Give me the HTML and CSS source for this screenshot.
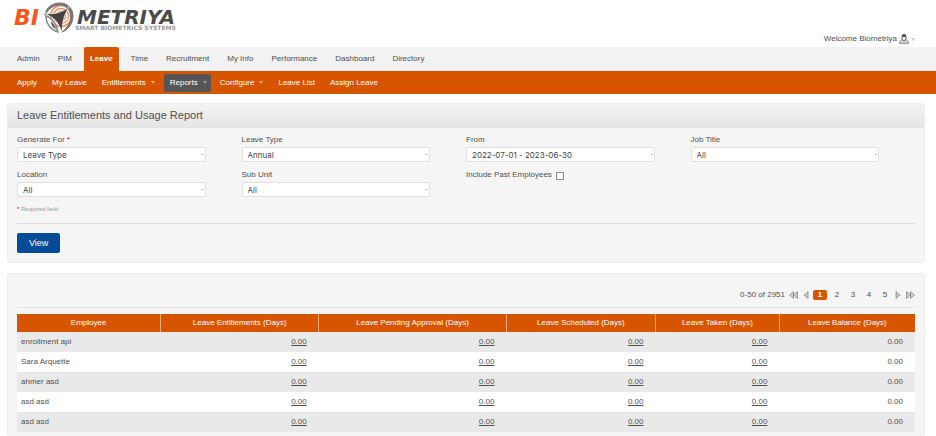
FILE: index.html
```html
<!DOCTYPE html>
<html lang="en">

<head>
  <meta charset="UTF-8" />
  <meta name="viewport" content="width=device-width, initial-scale=1.0" />
  <title>Leave Entitlements and Usage Report</title>
  <link rel="stylesheet" href="styles.css">
</head>

<body>
  <header class="header">
    <svg class="logo" width="170" height="34" viewBox="0 0 170 34" role="img" aria-label="Biometriya">
      <text class="logo-bi" x="0" y="24">BI</text>
      <!-- emblem -->
      <circle cx="46" cy="16" r="12" fill="#fff" />
      <g fill="none" stroke="#f58a58">
        <circle cx="47" cy="15" r="10.500" stroke-width="1.600" />
        <circle cx="47" cy="15" r="7.500" stroke-width="1.400" />
        <circle cx="47" cy="15" r="4.500" stroke-width="1.400" />
      </g>
      <path d="M31 14C32 6 39 2 46 2c8 0 13 6 13 13 0 8-5 14-11 16 5-4 9-9 8.500-16C56 8 52 4 46 4c-6 0-11 3-15 10z" fill="#777" stroke="#777" />
      <path d="M31 12c8 2 16 0 24-6-5 8-7 15-7 26-2-6-4-11-8-14-2-2-5-3-9-6z" fill="#444" stroke="#fff" stroke-width=".6" />
      <path d="M32 15c5 1 10 7 12 16-7-2-12-8-12-16z" fill="#fff" stroke="#888" stroke-width="1.500" />
      <path d="M37 20c2 2 4 5 5 8-3-1-5-4-5-8z" fill="#555" />
      <text class="logo-name" x="63" y="23">METRIYA</text>
      <text class="logo-tag" x="61" y="29">SMART BIOMETRICS SYSTEMS</text>
    </svg>
    <a class="welcome" href="#">
      Welcome Biometriya
      <svg width="10" height="10" viewBox="0 0 10 10" aria-hidden="true">
        <path d="M.5 9.500V7.500L3 5.500h4l2.500 2v2z" fill="#ccc" stroke="#888" stroke-width=".8" />
        <path d="M3 5V2.500a2 2 0 0 1 4 0V5L5 7z" fill="#eee" stroke="#666" />
        <path d="M3 3V2a2 2 0 0 1 4 0v1z" fill="#555" />
      </svg>
      <span class="caret"></span>
    </a>
  </header>

  <nav class="menu">
    <a href="#">Admin</a>
    <a href="#">PIM</a>
    <a href="#" class="current">Leave</a>
    <a href="#">Time</a>
    <a href="#">Recruitment</a>
    <a href="#">My Info</a>
    <a href="#">Performance</a>
    <a href="#">Dashboard</a>
    <a href="#">Directory</a>
  </nav>

  <nav class="submenu">
    <a href="#">Apply</a>
    <a href="#">My Leave</a>
    <a href="#">Entitlements <span class="caret"></span></a>
    <a href="#" class="selected">Reports <span class="caret"></span></a>
    <a href="#">Configure <span class="caret"></span></a>
    <a href="#">Leave List</a>
    <a href="#">Assign Leave</a>
  </nav>

  <main class="content">
    <section class="box">
      <h1 class="head">Leave Entitlements and Usage Report</h1>
      <form class="inner">
        <div class="fields">
          <div class="field">
            <label for="reportType">Generate For <em>*</em></label>
            <select id="reportType"><option>Leave Type</option></select>
          </div>
          <div class="field">
            <label for="leaveType">Leave Type</label>
            <select id="leaveType"><option>Annual</option></select>
          </div>
          <div class="field">
            <label for="period">From</label>
            <select id="period"><option>2022-07-01 - 2023-06-30</option></select>
          </div>
          <div class="field">
            <label for="jobTitle">Job Title</label>
            <select id="jobTitle"><option>All</option></select>
          </div>
          <div class="field">
            <label for="location">Location</label>
            <select id="location"><option>All</option></select>
          </div>
          <div class="field">
            <label for="subUnit">Sub Unit</label>
            <select id="subUnit"><option>All</option></select>
          </div>
          <div class="field check">
            <label for="pastEmployees">Include Past Employees</label>
            <input type="checkbox" id="pastEmployees" />
          </div>
        </div>
        <p class="required"><em>*</em> Required field</p>
        <div class="actions">
          <button type="button">View</button>
        </div>
      </form>
    </section>

    <section class="box results">
      <div class="paging">
        <span class="count">0-50 of 2951</span>
        <a href="#" aria-label="First"><svg width="10" height="8" viewBox="0 0 10 8">
            <path d="M4.500 .5v7L.5 4zM8.500 .5v7L4.500 4z" />
          </svg></a>
        <a href="#" aria-label="Previous"><svg width="6" height="8" viewBox="0 0 6 8">
            <path d="M5 .5v7L1 4z" />
          </svg></a>
        <a href="#" class="page current">1</a>
        <a href="#" class="page">2</a>
        <a href="#" class="page">3</a>
        <a href="#" class="page">4</a>
        <a href="#" class="page">5</a>
        <a href="#" aria-label="Next"><svg width="6" height="8" viewBox="0 0 6 8">
            <path d="M1 .5v7L5 4z" />
          </svg></a>
        <a href="#" aria-label="Last"><svg width="10" height="8" viewBox="0 0 10 8">
            <path d="M1.500 .5v7L5.500 4zM5.500 .5v7L9.500 4z" />
          </svg></a>
      </div>
      <table class="table">
        <colgroup>
          <col class="col-employee">
          <col class="col-entitlements">
          <col class="col-pending">
          <col class="col-scheduled">
          <col class="col-taken">
          <col class="col-balance">
        </colgroup>
        <thead>
          <tr>
            <th>Employee</th>
            <th>Leave Entitlements (Days)</th>
            <th>Leave Pending Approval (Days)</th>
            <th>Leave Scheduled (Days)</th>
            <th>Leave Taken (Days)</th>
            <th>Leave Balance (Days)</th>
          </tr>
        </thead>
        <tbody>
          <tr>
            <td>enrollment api</td>
            <td><a href="#">0.00</a></td>
            <td><a href="#">0.00</a></td>
            <td><a href="#">0.00</a></td>
            <td><a href="#">0.00</a></td>
            <td>0.00</td>
          </tr>
          <tr>
            <td>Sara Arquette</td>
            <td><a href="#">0.00</a></td>
            <td><a href="#">0.00</a></td>
            <td><a href="#">0.00</a></td>
            <td><a href="#">0.00</a></td>
            <td>0.00</td>
          </tr>
          <tr>
            <td>ahmer asd</td>
            <td><a href="#">0.00</a></td>
            <td><a href="#">0.00</a></td>
            <td><a href="#">0.00</a></td>
            <td><a href="#">0.00</a></td>
            <td>0.00</td>
          </tr>
          <tr>
            <td>asd asd</td>
            <td><a href="#">0.00</a></td>
            <td><a href="#">0.00</a></td>
            <td><a href="#">0.00</a></td>
            <td><a href="#">0.00</a></td>
            <td>0.00</td>
          </tr>
          <tr>
            <td>asd asd</td>
            <td><a href="#">0.00</a></td>
            <td><a href="#">0.00</a></td>
            <td><a href="#">0.00</a></td>
            <td><a href="#">0.00</a></td>
            <td>0.00</td>
          </tr>
        </tbody>
      </table>
    </section>
  </main>
</body>

</html>
```
FILE: styles.css
```css
* {
  box-sizing: border-box;
}

body {
  display: flex;
  flex-direction: column;
  margin: 0;
  height: 100vh;
  font-family: "Liberation Sans", Arial, sans-serif;
  font-size: 8px;
  line-height: 10px;
  color: #505050;
  background-color: white;
}

a {
  color: inherit;
  text-decoration: none;
}

em {
  color: #c00;
  font-style: normal;
}

.header {
  display: flex;
  justify-content: space-between;
  align-items: flex-end;
  height: 47px;
  padding: 0 21px 3px 14px;
}

.logo {
  align-self: flex-start;
  margin-top: 1px;
}

.logo-bi,
.logo-name {
  font: italic bold 20px "DejaVu Sans", sans-serif;
}

.logo-bi {
  font-size: 22px;
  fill: #f4581c;
}

.logo-name {
  fill: #4a4a4a;
}

.logo-tag {
  font: bold 6px "DejaVu Sans", sans-serif;
  fill: #999;
}

.welcome {
  display: flex;
  align-items: center;
  gap: 2px;
}

.caret {
  border: 2px solid transparent;
  border-top: 3px solid #ccc;
  border-bottom: 0;
}

.menu,
.submenu {
  display: flex;
  padding: 0 11px;
}

.menu {
  gap: 6px;
  height: 24px;
  background-color: #f2f2f2;
}

.menu a {
  padding: 7px 6px;
}

.menu .current {
  border-radius: 2px 2px 0 0;
  background-color: #d75500;
  color: white;
  font-weight: bold;
}

.submenu {
  align-items: center;
  gap: 3px;
  height: 23px;
  background-color: #d75500;
  color: white;
}

.submenu a {
  display: flex;
  align-items: center;
  gap: 5px;
  padding: 4px 6px;
  border-radius: 2px;
}

.submenu .caret {
  border-top-color: #f0a878;
}

.submenu .selected {
  padding-right: 4px;
  background-color: #555;
}

.submenu .selected .caret {
  border-top-color: #999;
}

.content {
  display: flex;
  flex: 1;
  flex-direction: column;
  gap: 10px;
  padding: 9px 11px 0 7px;
}

.box {
  border: 1px solid #eee;
  border-radius: 3px;
  background-color: #f5f5f5;
}

.head {
  margin: 0;
  padding: 4px 9px;
  border-bottom: 1px solid #e2e2e2;
  background: linear-gradient(#f3f3f3, #e6e6e6);
  font-size: 11px;
  font-weight: normal;
  line-height: 15px;
}

.inner {
  padding: 7px 9px 9px;
}

.fields {
  display: grid;
  grid-template-columns: repeat(4, 1fr);
  row-gap: 8px;
}

.field {
  display: flex;
  flex-direction: column;
  gap: 2px;
}

.field select {
  appearance: none;
  width: 84%;
  height: 15px;
  padding: 0 5px;
  border: 1px solid #e0e0e0;
  border-radius: 2px;
  background: linear-gradient(#bbb, #bbb) right 1px center / 2px 1px no-repeat white;
  color: #444;
  font-family: Inter, sans-serif;
  font-size: 8px;
}

.check {
  flex-direction: row;
  align-items: flex-start;
  gap: 4px;
}

.check input {
  appearance: none;
  width: 8px;
  height: 8px;
  margin: 2px 0 0;
  border: 1px solid #888;
  background-color: white;
}

.required {
  margin: 7px 0 9px;
  color: #999;
  font-size: 6px;
}

.actions {
  padding-top: 9px;
  border-top: 1px solid #ddd;
}

.actions button {
  height: 20px;
  padding: 0 12px;
  border: 0;
  border-radius: 2px;
  background-color: #054c98;
  color: white;
  font-family: inherit;
  font-size: 9px;
}

.results {
  flex: 1;
  padding: 9px 9px 0;
  border-bottom: 0;
}

.paging {
  display: flex;
  justify-content: flex-end;
  align-items: center;
  gap: 4px;
  height: 25px;
  margin-bottom: 6px;
  border-bottom: 1px solid #e4e4e4;
}

.paging a {
  display: flex;
}

.paging svg {
  fill: #ccc;
  stroke: #888;
  stroke-width: .8;
}

.paging .page {
  justify-content: center;
  width: 12px;
}

.paging .current {
  width: 14px;
  border-radius: 2px;
  background-color: #d75500;
  color: white;
  font-weight: bold;
}

.table {
  width: 100%;
  border-collapse: collapse;
  table-layout: fixed;
}

.col-employee {
  width: 16%;
}

.col-entitlements {
  width: 17.6%;
}

.col-pending {
  width: 20.9%;
}

.col-scheduled {
  width: 16.6%;
}

.col-taken {
  width: 13.8%;
}

.table th {
  height: 18px;
  padding: 0;
  background-color: #d75500;
  color: white;
  font-weight: normal;
}

.table th + th {
  border-left: 1px solid #e9a678;
}

.table td {
  height: 20px;
  padding: 0 12px;
  background-color: white;
  text-align: right;
}

.table td:first-child {
  padding-left: 4px;
  text-align: left;
}

.table tr:nth-child(odd) td {
  background-color: #e9e9e9;
}

.table td a {
  text-decoration: underline;
}
```
